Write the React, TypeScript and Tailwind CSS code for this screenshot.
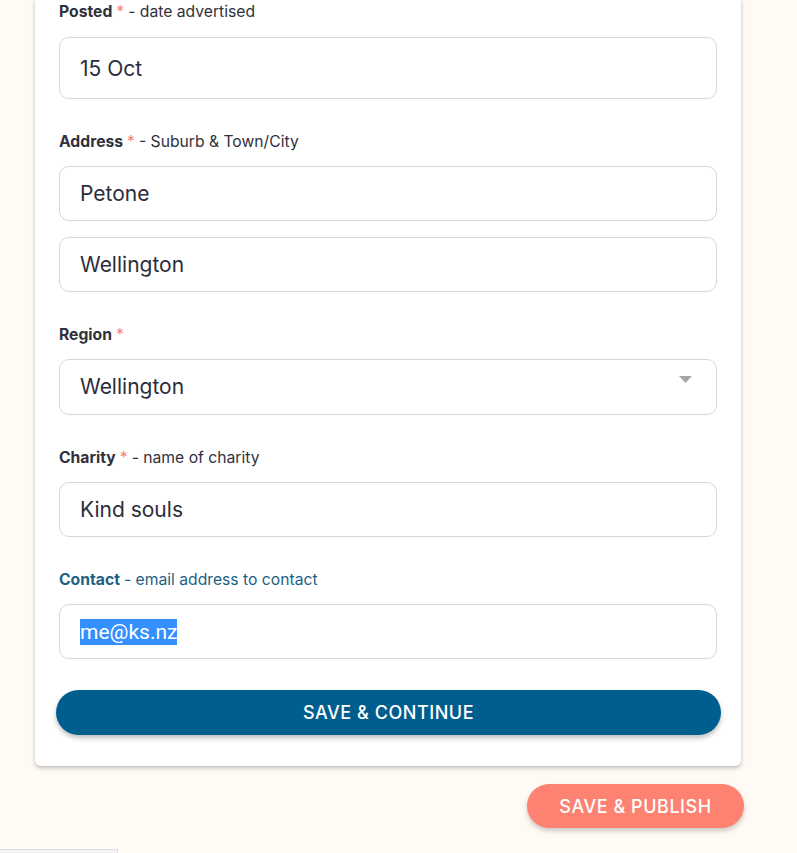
import React from 'react';

const Label = ({ title, hint, required = true, tone = 'dark' }: { title: string; hint?: string; required?: boolean; tone?: 'dark' | 'blue' }) => (
  <div className={`text-[15.7px] leading-5 ${tone === 'blue' ? 'text-[#1d5f84]' : 'text-[#30313d]'}`}>
    <span className="font-bold">{title}</span>
    {required && <span className="ml-1 text-[#f6826f]">*</span>}
    {hint && <span className="ml-1">- {hint}</span>}
  </div>
);

const Field = ({ value, tall = false }: { value: string; tall?: boolean }) => (
  <input
    readOnly
    defaultValue={value}
    className={`w-full ${tall ? 'h-[62px]' : 'h-[55px]'} rounded-[10px] border border-[#d6d6d6] bg-white px-5 text-[21px] text-[#2b2d3b] outline-none`}
  />
);

export default function App() {
  return (
    <div className="min-h-[853px] bg-[#fffaf4] font-['Inter','Noto_Sans',sans-serif]">
      <div className="ml-[35px] w-[706px] rounded-b-[6px] bg-white px-6 pb-[31px] pt-[2px] shadow-[0_2px_4px_rgba(0,0,0,0.25)]">
        <Label title="Posted" hint="date advertised" />
        <div className="mt-[15px]">
          <Field value="15 Oct" tall />
        </div>

        <div className="mt-[33px]">
          <Label title="Address" hint="Suburb & Town/City" />
        </div>
        <div className="mt-[14px] flex flex-col gap-4">
          <Field value="Petone" />
          <Field value="Wellington" />
        </div>

        <div className="mt-[33px]">
          <Label title="Region" />
        </div>
        <div className="mt-[14px] flex h-[56px] items-center justify-between rounded-[10px] border border-[#d6d6d6] bg-white pl-5 pr-[24px] text-[21px] text-[#2b2d3b]">
          <span>Wellington</span>
          <svg width="13" height="7" viewBox="0 0 13 7" className="-mt-[15px]">
            <path d="M0 0 H13 L6.5 7 Z" fill="#a6a6a6" />
          </svg>
        </div>

        <div className="mt-[33px]">
          <Label title="Charity" hint="name of charity" />
        </div>
        <div className="mt-[14px]">
          <Field value="Kind souls" />
        </div>

        <div className="mt-[33px]">
          <Label title="Contact" hint="email address to contact" required={false} tone="blue" />
        </div>
        <div className="mt-[14px] flex h-[55px] items-center rounded-[10px] border border-[#d6d6d6] bg-white px-5">
          <span className="bg-[#3390ff] text-[21px] leading-[26px] text-white font-['Roboto','Liberation_Sans',sans-serif]">me@ks.nz</span>
        </div>

        <button className="-mx-[3px] mt-[31px] h-[45px] w-[calc(100%+7px)] rounded-full bg-[#005e8f] text-[18px] font-medium tracking-[0.03em] text-white shadow-[0_3px_5px_rgba(0,0,0,0.25)]">
          SAVE &amp; CONTINUE
        </button>
      </div>

      <div className="flex w-[744px] justify-end pt-[18px]">
        <button className="h-[44px] w-[217px] rounded-full bg-[#fd8272] text-[18px] font-medium tracking-[0.03em] text-white shadow-[0_3px_5px_rgba(0,0,0,0.2)]">
          SAVE &amp; PUBLISH
        </button>
      </div>

      <div className="mt-[21px] h-[4px] w-[118px] border-t border-r border-[#dddddd] bg-[#f3f3f3]" />
    </div>
  );
}
